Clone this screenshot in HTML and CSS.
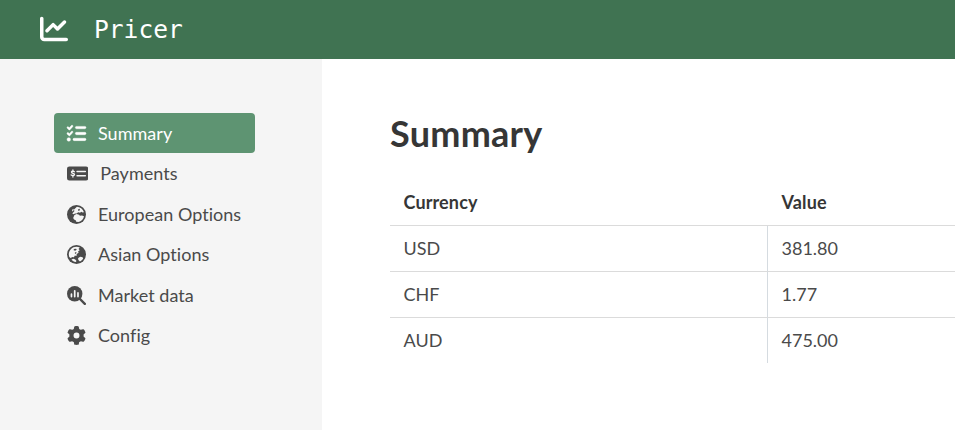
FILE: index.html
```html
<!DOCTYPE html>
<html lang="en">
<head>
<meta charset="utf-8">
<title>Pricer</title>
<link rel="stylesheet" href="styles.css">
</head>
<body>
<header class="topbar">
  <svg class="logo" viewBox="0 0 512 512"><path d="M64 64c0-17.700-14.300-32-32-32S0 46.300 0 64V400c0 44.200 35.800 80 80 80H480c17.700 0 32-14.300 32-32s-14.300-32-32-32H80c-8.800 0-16-7.200-16-16V64zm406.600 86.600c12.500-12.500 12.500-32.800 0-45.300s-32.800-12.500-45.300 0L320 210.700l-57.400-57.400c-12.500-12.500-32.800-12.500-45.300 0l-112 112c-12.500 12.500-12.500 32.800 0 45.300s32.800 12.500 45.300 0L240 221.300l57.400 57.400c12.500 12.500 32.800 12.500 45.300 0l128-128z"/></svg>
  <span class="brand">Pricer</span>
</header>
<div class="layout">
  <nav class="sidebar">
    <a class="item active">
      <svg class="icon bold" viewBox="0 0 512 512"><path d="M152.100 38.200c9.900 8.900 10.700 24 1.800 33.900l-72 80c-4.400 4.900-10.600 7.800-17.200 7.900s-12.900-2.400-17.600-7L7 113C-2.300 103.600-2.300 88.400 7 79s24.600-9.400 33.900 0l22.100 22.100 55.100-61.200c8.900-9.900 24-10.700 33.900-1.800zm0 160c9.900 8.900 10.700 24 1.800 33.900l-72 80c-4.400 4.900-10.600 7.800-17.200 7.900s-12.900-2.400-17.600-7L7 273c-9.400-9.400-9.400-24.600 0-33.900s24.600-9.400 33.900 0l22.100 22.100 55.100-61.200c8.900-9.900 24-10.700 33.900-1.800zM224 96c0-17.700 14.300-32 32-32H480c17.700 0 32 14.300 32 32s-14.300 32-32 32H256c-17.700 0-32-14.300-32-32zm0 160c0-17.700 14.300-32 32-32H480c17.700 0 32 14.300 32 32s-14.300 32-32 32H256c-17.700 0-32-14.300-32-32zM160 416c0-17.700 14.300-32 32-32H480c17.700 0 32 14.300 32 32s-14.300 32-32 32H192c-17.700 0-32-14.300-32-32zM48 368a48 48 0 1 1 0 96 48 48 0 1 1 0-96z"/></svg>
      <span>Summary</span>
    </a>
    <a class="item">
      <svg class="icon wide" viewBox="0 0 576 512"><path fill-rule="evenodd" d="M64 64h448a64 64 0 0 1 64 64v256a64 64 0 0 1-64 64H64a64 64 0 0 1-64-64V128a64 64 0 0 1 64-64zM272 184a16 16 0 0 0 0 40h224a16 16 0 0 0 0-40zM272 296a16 16 0 0 0 0 40h224a16 16 0 0 0 0-40z"/><path class="cut" d="M201 207c-20-13-77-26-80 9-3 43 86 27 82 70-5 36-66 27-91 10M160 158v38M160 307v45"/></svg>
      <span>Payments</span>
    </a>
    <a class="item">
      <svg class="icon" viewBox="0 0 512 512"><circle cx="256" cy="256" r="256"/><path class="land" d="M266 48c84 2 162 56 192 144l-36 10-40-22-30 26-50-8-44 34-36-6-52 24-26-20 34-44 24-24-18-32 34-34zM142 124l40-20-10 50-36 22zM200 272l60-28 64 16 24 30 56-8 54 18c-14 74-70 136-150 158l-60-6-14-44-44-14-24-44z"/><path d="M300 112l40-12 8 44-44 18zM400 220l40-14 14 34-40 8z"/></svg>
      <span>European Options</span>
    </a>
    <a class="item">
      <svg class="icon" viewBox="0 0 512 512"><circle cx="256" cy="256" r="256"/><path class="land" d="M48 256C48 140 142 48 256 48c34 0 64 6 90 20l-36 38 34 34-44 30 12 40-50 30-6 54-44-10-26 44-56-8-20 34-50-28zM120 392l52-22 50 24 34 40-20 26c-46-8-86-28-116-68zM320 336l44-22 56 16 16 32c-22 36-52 66-88 82l-34-36-20-38z"/><path d="M184 110l60-10 18 30-42 26-40-12zM206 214l34-24 20 22-30 28z"/></svg>
      <span>Asian Options</span>
    </a>
    <a class="item">
      <svg class="icon" viewBox="0 0 512 512"><path class="handle" d="M330 330L480 480"/><circle cx="208" cy="208" r="208"/><path class="bars" d="M120 220v64M208 128v156M296 188v96"/></svg>
      <span>Market data</span>
    </a>
    <a class="item">
      <svg class="icon" viewBox="0 0 512 512"><path d="M495.900 166.600c3.200 8.700 .5 18.400-6.400 24.600l-43.300 39.400c1.100 8.300 1.700 16.800 1.700 25.400s-.6 17.100-1.700 25.400l43.300 39.400c6.900 6.200 9.600 15.900 6.400 24.600c-4.400 11.900-9.700 23.300-15.800 34.300l-4.700 8.100c-6.600 11-14 21.400-22.100 31.200c-5.900 7.200-15.700 9.600-24.500 6.800l-55.700-17.700c-13.400 10.300-28.200 18.900-44 25.400l-12.500 57.100c-2 9.100-9 16.300-18.200 17.800c-13.800 2.300-28 3.500-42.500 3.500s-28.700-1.200-42.500-3.500c-9.200-1.500-16.200-8.700-18.200-17.800l-12.500-57.100c-15.800-6.500-30.600-15.100-44-25.400L83.100 425.900c-8.800 2.800-18.600 .3-24.500-6.800c-8.100-9.800-15.500-20.200-22.100-31.200l-4.700-8.100c-6.100-11-11.400-22.400-15.800-34.300c-3.200-8.700-.5-18.400 6.400-24.600l43.300-39.400C64.600 273.100 64 264.600 64 256s.6-17.100 1.700-25.400L22.400 191.200c-6.900-6.200-9.600-15.900-6.400-24.600c4.400-11.900 9.700-23.300 15.800-34.300l4.700-8.100c6.600-11 14-21.400 22.100-31.200c5.900-7.200 15.700-9.600 24.500-6.800l55.700 17.700c13.400-10.300 28.200-18.900 44-25.400l12.500-57.100c2-9.100 9-16.300 18.200-17.800C227.300 1.200 241.500 0 256 0s28.700 1.200 42.500 3.500c9.200 1.500 16.200 8.700 18.200 17.800l12.500 57.100c15.800 6.500 30.600 15.100 44 25.400l55.700-17.700c8.800-2.800 18.600-.3 24.500 6.800c8.100 9.800 15.500 20.200 22.100 31.200l4.700 8.100c6.100 11 11.400 22.400 15.800 34.300zM256 336a80 80 0 1 0 0-160 80 80 0 1 0 0 160z"/></svg>
      <span>Config</span>
    </a>
  </nav>
  <main class="content">
    <h1>Summary</h1>
    <table class="table">
      <thead><tr><th>Currency</th><th>Value</th></tr></thead>
      <tbody>
        <tr><td>USD</td><td>381.80</td></tr>
        <tr><td>CHF</td><td>1.77</td></tr>
        <tr><td>AUD</td><td>475.00</td></tr>
      </tbody>
    </table>
  </main>
</div>
</body>
</html>
```
FILE: styles.css
```css
* { box-sizing: border-box; }
body {
  margin: 0;
  height: 430px;
  overflow: hidden;
  display: flex;
  flex-direction: column;
  background: #fff;
  color: #4a4a4a;
  font: 18px/27px Lato, sans-serif;
  font-variant-ligatures: none;
}
.topbar {
  flex: none;
  height: 59px;
  padding: 0 40px;
  display: flex;
  align-items: center;
  gap: 26px;
  background: #407352;
  color: #fff;
}
.logo {
  width: 28px;
  height: 28px;
  margin-bottom: 2px;
  fill: currentColor;
}
.brand {
  font: 24.6px/36px "DejaVu Sans Mono", monospace;
}
.layout {
  flex: 1;
  display: flex;
}
.sidebar {
  flex: none;
  width: 322px;
  padding: 54px 67px 0 54px;
  background: #f5f5f5;
}
.item {
  display: flex;
  align-items: center;
  width: 201px;
  height: 40.5px;
  padding-left: 13px;
  gap: 12px;
  border-radius: 4px;
  white-space: nowrap;
  letter-spacing: .03px;
}
.active {
  height: 40px;
  margin-bottom: .5px;
  background: #5e9472;
  color: #fff;
}
.icon {
  flex: none;
  width: 19px;
  height: 19px;
  fill: currentColor;
}
.bold {
  overflow: visible;
  stroke: currentColor;
  stroke-width: 12;
}
.wide { width: 21.3px; }
.cut, .bars {
  fill: none;
  stroke: #f5f5f5;
  stroke-width: 36;
  stroke-linecap: round;
}
.bars { stroke-width: 46; }
.land { fill: #f5f5f5; }
.handle {
  stroke: currentColor;
  stroke-width: 64;
  stroke-linecap: round;
}
.content {
  flex: 1;
  padding: 54px 0 0 68px;
}
h1 {
  margin: 0 0 25px;
  color: #363636;
  font-size: 36px;
  line-height: 41px;
  font-weight: 700;
  letter-spacing: .25px;
}
.table {
  width: 100%;
  table-layout: fixed;
  border-collapse: separate;
  border-spacing: 0;
}
.table th:first-child, .table td:first-child { width: 378px; }
.table th, .table td {
  height: 46px;
  padding: 9px 13.5px;
  text-align: left;
}
.table th {
  height: 47px;
  color: #363636;
  font-weight: 700;
  letter-spacing: .13px;
  border-bottom: 1px solid #dbdbdb;
}
.table tbody tr:not(:last-child) td { border-bottom: 1px solid #dbdbdb; }
.table tbody tr:last-child td { height: 45px; }
.table td:first-child { border-right: 1px solid #d5dbe0; }
```
